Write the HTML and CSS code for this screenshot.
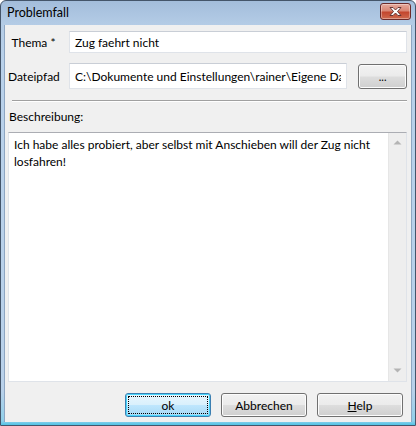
FILE: index.html
```html
<!DOCTYPE html>
<html>
<head>
<meta charset="utf-8">
<link rel="stylesheet" href="styles.css">
</head>
<body>
<div class="window">
  <div class="titlebar">
    <span class="title">Problemfall</span>
    <div class="close">
      <svg width="15" height="11" viewBox="0 0 15 11">
        <path d="M2 1.5 L5 1.5 L7.5 4 L10 1.5 L13 1.5 L9.5 5.5 L13 9.5 L10 9.5 L7.5 7 L5 9.5 L2 9.5 L5.5 5.5 Z" fill="#ffffff" stroke="#5a2a2a" stroke-width="0.9" stroke-linejoin="round"/>
      </svg>
    </div>
  </div>
  <div class="client">
    <div class="row row-thema">
      <div class="label">Thema *</div>
      <div class="field field-thema">Zug faehrt nicht</div>
    </div>
    <div class="row row-path">
      <div class="label">Dateipfad</div>
      <div class="field field-path"><span class="clip">C:\Dokumente und Einstellungen\rainer\Eigene Dat</span></div>
      <div class="btn btn-browse">...</div>
    </div>
    <div class="separator"></div>
    <div class="desc-label">Beschreibung:</div>
    <div class="textarea">
      <div class="ta-text">Ich habe alles probiert, aber selbst mit Anschieben will der Zug nicht<br>losfahren!</div>
      <div class="scrollbar">
        <svg class="arrow" width="9" height="5" viewBox="0 0 9 5"><path d="M0.5 4.5 L4.5 0.5 L8.5 4.5 Z" fill="#b4b4b4"/></svg>
        <svg class="arrow" width="9" height="5" viewBox="0 0 9 5"><path d="M0.5 0.5 L4.5 4.5 L8.5 0.5 Z" fill="#b4b4b4"/></svg>
      </div>
    </div>
    <div class="buttons">
      <div class="btn btn-default"><span class="focus">ok</span></div>
      <div class="btn">Abbrechen</div>
      <div class="btn"><span><u>H</u>elp</span></div>
    </div>
  </div>
</div>
</body>
</html>
```

FILE: styles.css
```css
html, body {
  margin: 0;
  padding: 0;
  background: #ffffff;
}
body {
  font-family: Lato, "Noto Sans", sans-serif;
  font-size: 12px;
  color: #000000;
}
.window {
  width: 416px;
  height: 426px;
  box-sizing: border-box;
  border: 1px solid #44556a;
  border-radius: 6px 6px 0 0;
  background: linear-gradient(to bottom, #a3bddb 0px, #b4cce6 24px, #b9d1ea 60px, #b9d1ea 390px, #8fd0ea 420px, #40bfe4 425px);
  padding: 0 3px 3px 3px;
  display: flex;
  flex-direction: column;
}
.titlebar {
  height: 24px;
  display: flex;
  align-items: center;
  justify-content: space-between;
  padding: 0 1px 0 3px;
}
.title {
  font-size: 12.5px;
  color: #000000;
  margin-top: -1px;
}
.close {
  width: 29px;
  height: 15px;
  border: 1px solid #6b2a2a;
  border-radius: 3px;
  background: linear-gradient(to bottom, #e5a99c 0%, #d98674 45%, #c3462e 55%, #cf6a4f 100%);
  box-shadow: inset 0 0 0 1px rgba(255,255,255,0.35);
  display: flex;
  align-items: center;
  justify-content: center;
  margin-top: -3px;
}
.close svg { display: block; }
.client {
  flex: 1;
  background: #f0f0f0;
  border-left: 1px solid #8ea6c2;
  border-right: 1px solid #8ea6c2;
  padding: 6px 4px 0 3px;
  display: flex;
  flex-direction: column;
}
.row {
  display: flex;
  align-items: center;
}
.row-path { margin-top: 10px; }
.label {
  width: 51px;
  text-align: center;
  margin-right: 10px;
  white-space: nowrap;
}
.field {
  box-sizing: border-box;
  background: #ffffff;
  border: 1px solid #dfe3e9;
  border-top-color: #c9ced6;
  padding: 0 5px;
  white-space: nowrap;
  overflow: hidden;
  display: flex;
  align-items: center;
}
.field-thema {
  height: 22px;
  flex: 1;
}
.field-path {
  height: 26px;
  width: 280px;
}
.clip {
  overflow: hidden;
  white-space: nowrap;
}
.btn {
  box-sizing: border-box;
  border: 1px solid #707070;
  border-radius: 3px;
  background: linear-gradient(to bottom, #f2f2f2 0%, #ebebeb 48%, #dddddd 52%, #cfcfcf 100%);
  box-shadow: inset 0 0 0 1px #fcfcfc;
  display: flex;
  align-items: center;
  justify-content: center;
  height: 24px;
  width: 86px;
}
.btn-browse {
  width: 49px;
  height: 25px;
  margin-left: 11px;
  font-size: 11px;
}
.separator {
  margin-top: 11px;
  margin-left: 4px;
  height: 1px;
  background: #a0a0a0;
  border-bottom: 1px solid #ffffff;
}
.desc-label {
  margin-top: 7px;
  margin-left: 1px;
  height: 16px;
  line-height: 16px;
}
.textarea {
  margin-top: 7px;
  height: 250px;
  box-sizing: border-box;
  background: #ffffff;
  border: 1px solid #dfe3e9;
  border-top-color: #abadb3;
  display: flex;
}
.ta-text {
  flex: 1;
  min-width: 0;
  padding: 3px 5px;
  line-height: 17px;
  white-space: nowrap;
  overflow: hidden;
}
.scrollbar {
  width: 17px;
  flex: none;
  background: #eeeeee;
  border-left: 1px solid #e6e6e6;
  display: flex;
  flex-direction: column;
  justify-content: space-between;
  align-items: center;
  padding: 7px 0 8px 0;
}
.arrow { display: block; }
.buttons {
  margin-top: 11px;
  display: flex;
  justify-content: flex-end;
  gap: 10px;
  padding-right: 4px;
}
.btn-default {
  border-color: #3c7fb1;
  background: linear-gradient(to bottom, #eaf6fd 0%, #d9f0fc 48%, #bee6fd 52%, #a7d9f5 100%);
  box-shadow: inset 0 0 0 1px #48d5fb;
  padding: 2px;
}
.focus {
  flex: 1;
  align-self: stretch;
  display: flex;
  align-items: center;
  justify-content: center;
  border: 1px dotted #000000;
}
u { text-decoration: underline; }
```
